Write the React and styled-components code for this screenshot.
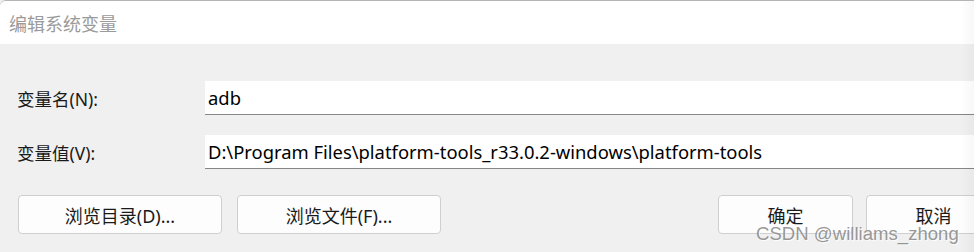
import React from "react";
import styled, { createGlobalStyle } from "styled-components";

const Global = createGlobalStyle`
  html, body {
    margin: 0;
    padding: 0;
    width: 974px;
    height: 252px;
    overflow: hidden;
    background: #f0f0f0;
  }
  body {
    font-family: "Noto Sans", "Noto Sans CJK SC", sans-serif;
  }
`;

const Window = styled.div`
  position: relative;
  width: 1020px;
  height: 252px;
  background: #f0f0f0;
  border-top: 1px solid #b4b4b4;
  border-top-left-radius: 6px;
  box-sizing: border-box;
`;

const TitleBar = styled.div`
  height: 43px;
  background: #fff;
  border-top-left-radius: 6px;
  display: flex;
  align-items: center;
  padding-left: 9px;
  font-size: 18px;
  color: #9a9a9a;
`;

const Body = styled.div`
  padding: 37px 19px 0 17px;
`;

const Form = styled.div`
  display: grid;
  grid-template-columns: 188px 1fr;
  row-gap: 20px;
  align-items: center;
`;

const Label = styled.label`
  font-size: 17.5px;
  color: #1a1a1a;
`;

const Field = styled.div`
  height: 33px;
  background: #fff;
  border-bottom: 1px solid #868686;
  display: flex;
  align-items: center;
  padding-left: 3px;
  font-size: 18.4px;
  color: #000;
`;

const ButtonRow = styled.div`
  display: flex;
  justify-content: space-between;
  margin-top: 26px;
  margin-left: 1px;
`;

const Group = styled.div`
  display: flex;
  gap: ${(p) => p.gap}px;
`;

const Button = styled.button`
  width: ${(p) => p.w}px;
  height: 39px;
  background: #fdfdfd;
  border: 1px solid #cfcfcf;
  border-radius: 4px;
  font-family: inherit;
  font-size: 18px;
  color: #1a1a1a;
  padding: 0;
`;

const Fade = styled.div`
  position: absolute;
  top: 0;
  right: 46px;
  width: 14px;
  height: 100%;
  background: linear-gradient(to right, rgba(0, 0, 0, 0), rgba(0, 0, 0, 0.03));
  pointer-events: none;
`;

const Watermark = styled.div`
  position: absolute;
  left: 756px;
  top: 222px;
  font-family: "Liberation Sans", Arial, sans-serif;
  font-size: 18.6px;
  color: rgba(125, 125, 125, 0.8);
  text-shadow: 1px 1px 1px rgba(255, 255, 255, 0.9);
  white-space: nowrap;
`;

export default function App() {
  return (
    <>
      <Global />
      <Window>
        <TitleBar>编辑系统变量</TitleBar>
        <Body>
          <Form>
            <Label>变量名(N):</Label>
            <Field>adb</Field>
            <Label>变量值(V):</Label>
            <Field>D:\Program Files\platform-tools_r33.0.2-windows\platform-tools</Field>
          </Form>
          <ButtonRow>
            <Group gap={15}>
              <Button w={204}>浏览目录(D)...</Button>
              <Button w={204}>浏览文件(F)...</Button>
            </Group>
            <Group gap={13}>
              <Button w={135}>确定</Button>
              <Button w={135}>取消</Button>
            </Group>
          </ButtonRow>
        </Body>
        <Fade />
        <Watermark>CSDN @williams_zhong</Watermark>
      </Window>
    </>
  );
}
